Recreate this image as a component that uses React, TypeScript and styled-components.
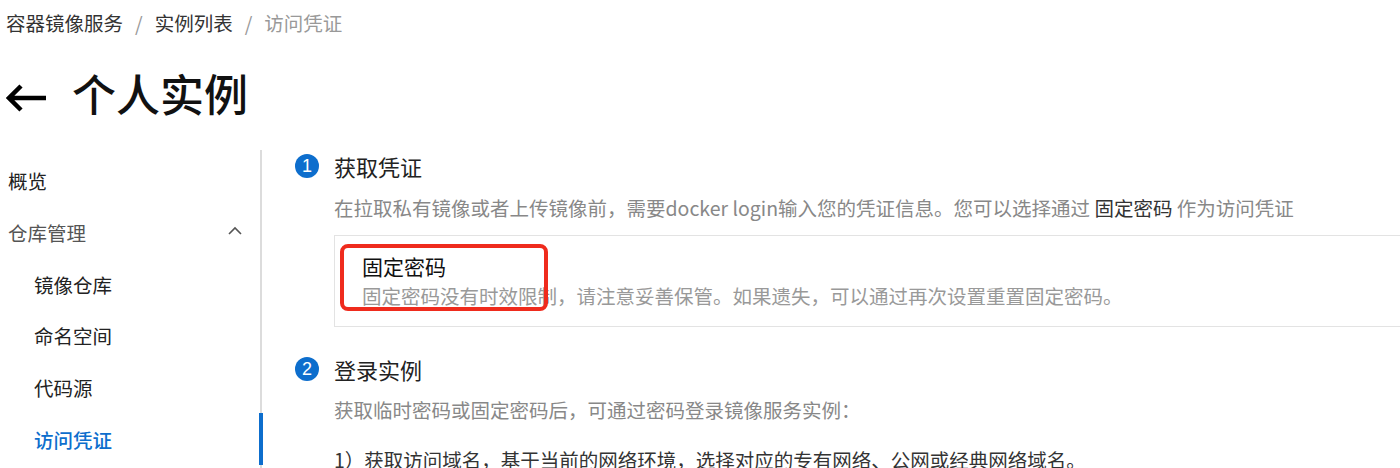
import React from "react";
import styled, { createGlobalStyle } from "styled-components";

const GlobalStyle = createGlobalStyle`
  html, body { margin: 0; padding: 0; background: #fff; }
  body {
    font-family: "Noto Sans CJK SC", "Noto Sans", "Liberation Sans", sans-serif;
    color: #333;
    overflow: hidden;
  }
`;

const Page = styled.div`
  width: 1400px;
  height: 468px;
  overflow: hidden;
`;

const Breadcrumb = styled.nav`
  display: flex;
  align-items: center;
  height: 44px;
  padding-left: 6px;
  font-size: 19.5px;
  color: #333;
`;

const Crumb = styled.span<{ $current?: boolean }>`
  color: ${(p) => (p.$current ? "#999" : "#333")};
`;

const Sep = styled.span`
  color: #999;
  margin: 0 12px;
`;

const Header = styled.div`
  display: flex;
  align-items: center;
  height: 106px;
  padding-left: 6px;
`;

const BackIcon = styled.svg`
  width: 42px;
  height: 30px;
  margin-right: 24px;
  margin-top: 2px;
`;

const Title = styled.h1`
  margin: 0;
  font-size: 44px;
  font-weight: 500;
  color: #111;
  line-height: 1;
  margin-top: -8px;
`;

const Body = styled.div`
  display: flex;
  align-items: stretch;
  height: 318px;
`;

const Sidebar = styled.aside`
  width: 262px;
  flex-shrink: 0;
  border-right: 2px solid #dcdcdc;
  padding-top: 5px;
  box-sizing: border-box;
`;

const NavItem = styled.div<{ $sub?: boolean; $active?: boolean; $group?: boolean }>`
  position: relative;
  display: flex;
  align-items: center;
  justify-content: space-between;
  height: 51.7px;
  padding-left: ${(p) => (p.$sub ? "34px" : "8px")};
  padding-right: 18px;
  font-size: 19.5px;
  color: ${(p) => (p.$active ? "#0d6ecd" : p.$group ? "#555" : "#222")};
  font-weight: ${(p) => (p.$active ? 500 : 400)};
  &::after {
    content: "";
    display: ${(p) => (p.$active ? "block" : "none")};
    position: absolute;
    right: -3px;
    top: 0;
    bottom: 0;
    width: 4px;
    background: #0d6ecd;
  }
`;

const Chevron = styled.svg`
  width: 14px;
  height: 10px;
  margin-top: -4px;
`;

const Main = styled.main`
  flex: 1;
  padding-left: 33px;
  min-width: 0;
`;

const StepHeader = styled.div<{ $gap?: number }>`
  display: flex;
  align-items: center;
  height: 32px;
  margin-top: ${(p) => p.$gap ?? 0}px;
`;

const StepNum = styled.span`
  width: 24px;
  height: 24px;
  border-radius: 50%;
  background: #0d6ecd;
  color: #fff;
  font-family: "Liberation Sans", "Noto Sans", sans-serif;
  font-size: 18px;
  line-height: 1;
  display: flex;
  align-items: center;
  justify-content: center;
  margin-right: 15px;
  flex-shrink: 0;
`;

const StepTitle = styled.h2`
  margin: 0;
  font-size: 22px;
  font-weight: 400;
  color: #222;
  line-height: 32px;
`;

const Desc = styled.p<{ $gap: number; $dark?: boolean }>`
  margin: ${(p) => p.$gap}px 0 0 39px;
  font-size: 19.5px;
  line-height: 28px;
  color: ${(p) => (p.$dark ? "#333" : "#888")};
  white-space: nowrap;
`;

const Strong = styled.span`
  color: #333;
`;

const Card = styled.div`
  position: relative;
  margin: 13px -40px 0 39px;
  border: 1px solid #e3e3e3;
  padding: 16px 27px 16px;
`;

const CardTitle = styled.div`
  font-size: 21px;
  line-height: 28px;
  color: #111;
`;

const CardDesc = styled.div`
  margin-top: 2px;
  font-size: 19.5px;
  line-height: 28px;
  color: #999;
  white-space: nowrap;
`;

const Highlight = styled.div`
  position: absolute;
  left: 5px;
  top: 8px;
  width: 208px;
  height: 67px;
  box-sizing: border-box;
  border: 4px solid #ef2b1d;
  border-radius: 8px;
  pointer-events: none;
`;

export default function App() {
  return (
    <Page>
      <GlobalStyle />
      <Breadcrumb>
        <Crumb>容器镜像服务</Crumb>
        <Sep>/</Sep>
        <Crumb>实例列表</Crumb>
        <Sep>/</Sep>
        <Crumb $current>访问凭证</Crumb>
      </Breadcrumb>
      <Header>
        <BackIcon viewBox="0 0 42 30">
          <path
            d="M40 15H3M15 3L3 15L15 27"
            fill="none"
            stroke="#000"
            strokeWidth="4.5"
            strokeLinecap="butt"
            strokeLinejoin="miter"
          />
        </BackIcon>
        <Title>个人实例</Title>
      </Header>
      <Body>
        <Sidebar>
          <NavItem>概览</NavItem>
          <NavItem $group>
            仓库管理
            <Chevron viewBox="0 0 14 10">
              <polyline points="1,8 7,2 13,8" fill="none" stroke="#555" strokeWidth="1.6" />
            </Chevron>
          </NavItem>
          <NavItem $sub>镜像仓库</NavItem>
          <NavItem $sub>命名空间</NavItem>
          <NavItem $sub>代码源</NavItem>
          <NavItem $sub $active>访问凭证</NavItem>
        </Sidebar>
        <Main>
          <StepHeader>
            <StepNum>1</StepNum>
            <StepTitle>获取凭证</StepTitle>
          </StepHeader>
          <Desc $gap={12}>
            在拉取私有镜像或者上传镜像前，需要docker login输入您的凭证信息。您可以选择通过 <Strong>固定密码</Strong> 作为访问凭证
          </Desc>
          <Card>
            <CardTitle>固定密码</CardTitle>
            <CardDesc>固定密码没有时效限制，请注意妥善保管。如果遗失，可以通过再次设置重置固定密码。</CardDesc>
            <Highlight />
          </Card>
          <StepHeader $gap={26}>
            <StepNum>2</StepNum>
            <StepTitle>登录实例</StepTitle>
          </StepHeader>
          <Desc $gap={11}>获取临时密码或固定密码后，可通过密码登录镜像服务实例：</Desc>
          <Desc $gap={22} $dark>1）获取访问域名，基于当前的网络环境，选择对应的专有网络、公网或经典网络域名。</Desc>
        </Main>
      </Body>
    </Page>
  );
}
